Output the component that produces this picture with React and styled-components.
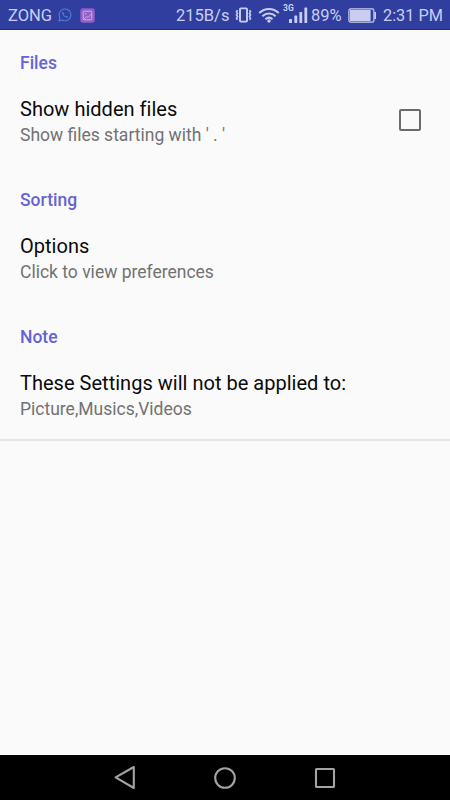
import React from "react";
import styled, { createGlobalStyle } from "styled-components";

const colors = {
  primary: "#303f9f",
  accent: "#6663d3",
  background: "#fafafa",
  title: "#0a0a0a",
  summary: "#727272",
  status: "#c9cef0",
  nav: "#a3a3a3",
};

const sections = [
  {
    header: "Files",
    title: "Show hidden files",
    summary: "Show files starting with ' . '",
    checkbox: true,
  },
  {
    header: "Sorting",
    title: "Options",
    summary: "Click to view preferences",
  },
  {
    header: "Note",
    title: "These Settings will not be applied to:",
    summary: "Picture,Musics,Videos",
  },
];

const ChatIcon = () => (
  <svg width="14" height="14" viewBox="0 0 14 14" fill="none">
    <path
      d="M1.1 13l.8-3.2A5.9 5.9 0 1 1 4.1 12z"
      stroke="#4f7fe0"
      strokeWidth="1.1"
    />
    <path
      d="M4.7 3.8c-1.3 1.3.3 3.7 1.8 4.9 1.5 1.2 2.9 1.3 3.6.1L8.6 7.7l-1 .7C6.8 8 6 7.2 5.8 6.3l.6-.8z"
      fill="#4f7fe0"
    />
  </svg>
);

const GalleryIcon = () => (
  <svg width="15" height="15" viewBox="0 0 15 15" fill="none">
    <rect x="0.3" y="0.3" width="14.4" height="14.4" rx="2.6" fill="#925fc6" />
    <rect x="3.2" y="3.2" width="8.6" height="8.6" rx="1" stroke="#d0b0e9" />
    <path d="M4 11l2.6-2.6L8 9.6 11.4 6" stroke="#d0b0e9" strokeWidth="0.9" />
    <circle cx="5.7" cy="5.7" r="0.8" fill="#d0b0e9" />
  </svg>
);

const VibrateIcon = () => (
  <svg width="17" height="16" viewBox="0 0 17 16" fill="none" stroke={colors.status}>
    <rect x="5" y="1.4" width="7" height="13.2" rx="0.8" strokeWidth="1.9" />
    <path
      d="M2.4 3.2l-.9 1.6 1 1.6-1 1.6 1 1.6-1 1.6.9 1.6M14.6 3.2l.9 1.6-1 1.6 1 1.6-1 1.6 1 1.6-.9 1.6"
      strokeWidth="1.6"
    />
  </svg>
);

const WifiIcon = () => (
  <svg width="22" height="16" viewBox="0 0 22 16" fill="none" stroke={colors.status} strokeWidth="2">
    <path d="M1.2 6C6.8.5 15.2.5 20.8 6M4.4 9.3c3.8-3.7 9.4-3.7 13.2 0M7.5 12.2c2.1-1.9 4.9-1.9 7 0" />
    <circle cx="11" cy="14" r="1.7" fill={colors.status} stroke="none" />
  </svg>
);

const SignalIcon = () => (
  <svg width="19" height="16" viewBox="0 0 19 16" fill={colors.status}>
    <rect x="0" y="12" width="3" height="4" rx="0.6" />
    <rect x="5.4" y="8.6" width="2.8" height="7.4" rx="0.6" />
    <rect x="10.4" y="5" width="2.8" height="11" rx="0.6" />
    <rect x="15.4" y="0.6" width="2.8" height="15.4" rx="0.6" />
  </svg>
);

const BatteryIcon = () => (
  <svg width="29" height="15" viewBox="0 0 29 15" fill="none">
    <rect x="0.9" y="0.9" width="25" height="13.2" rx="1.6" stroke={colors.status} strokeWidth="1.2" />
    <rect x="2" y="2" width="20.6" height="11" fill={colors.status} />
    <path d="M27.2 4v7" stroke={colors.status} strokeWidth="1.6" />
  </svg>
);

const BackIcon = () => (
  <svg width="24" height="26" viewBox="0 0 24 26" fill="none">
    <path d="M2.6 12.4L20.8 2v21z" stroke={colors.nav} strokeWidth="2.1" strokeLinejoin="round" />
  </svg>
);

const HomeIcon = () => (
  <svg width="24" height="24" viewBox="0 0 24 24" fill="none">
    <circle cx="12" cy="12" r="9.8" stroke={colors.nav} strokeWidth="2.1" />
  </svg>
);

const RecentIcon = () => (
  <svg width="24" height="24" viewBox="0 0 24 24" fill="none">
    <rect x="3" y="3" width="18" height="18" rx="0.6" stroke={colors.nav} strokeWidth="2.1" />
  </svg>
);

function App() {
  return (
    <Screen>
      <GlobalStyle />
      <StatusBar>
        <StatusText $width={50}>ZONG</StatusText>
        <ChatIcon />
        <GalleryIcon />
        <StatusRight>
          <StatusText $width={59}>215B/s</StatusText>
          <VibrateIcon />
          <WifiIcon />
          <SignalWrapper>
            <NetworkType>3G</NetworkType>
            <SignalIcon />
          </SignalWrapper>
          <StatusText $width={37}>89%</StatusText>
          <BatteryIcon />
          <Clock $width={60}>2:31 PM</Clock>
        </StatusRight>
      </StatusBar>

      <Preferences>
        {sections.map(({ header, title, summary, checkbox }) => (
          <Section key={header}>
            <SectionHeader>{header}</SectionHeader>
            <Row>
              <RowText>
                <Title>{title}</Title>
                <Summary>{summary}</Summary>
              </RowText>
              {checkbox && <Checkbox role="checkbox" aria-checked="false" />}
            </Row>
          </Section>
        ))}
      </Preferences>

      <NavBar>
        <NavBtn aria-label="Back">
          <BackIcon />
        </NavBtn>
        <NavBtn aria-label="Home">
          <HomeIcon />
        </NavBtn>
        <NavBtn aria-label="Recent apps">
          <RecentIcon />
        </NavBtn>
      </NavBar>
    </Screen>
  );
}

export default App;

const GlobalStyle = createGlobalStyle`
  * {
    box-sizing: border-box;
  }
  body {
    margin: 0;
    font-family: Roboto, "Liberation Sans", sans-serif;
    background-color: ${colors.background};
  }
  svg {
    display: block;
    flex-shrink: 0;
  }
`;
const Screen = styled.div`
  width: 450px;
  height: 800px;
  display: flex;
  flex-direction: column;
  overflow: hidden;
  background-color: ${colors.background};
`;
const StatusBar = styled.header`
  height: 30px;
  flex-shrink: 0;
  display: flex;
  align-items: center;
  padding: 1px 7px 0 8px;
  background-color: ${colors.primary};
  border-bottom: 1px solid #1d2a86;

  > svg + svg {
    margin-left: 8px;
  }
`;
const StatusRight = styled.div`
  display: flex;
  align-items: center;
  margin-left: auto;

  > svg + svg {
    margin-left: 6px;
  }
`;
const StatusText = styled.span`
  width: ${({ $width }) => $width}px;
  padding-top: 2px;
  font-size: 16.5px;
  line-height: 20px;
  white-space: nowrap;
  color: ${colors.status};
`;
const Clock = styled(StatusText)`
  margin-left: 6px;
  font-size: 16.3px;
`;
const SignalWrapper = styled.div`
  position: relative;
  margin: 0 3px 0 9px;
`;
const NetworkType = styled.span`
  position: absolute;
  top: -3px;
  left: -6px;
  font-size: 8.5px;
  line-height: 8px;
  font-weight: 700;
  color: ${colors.status};
`;
const Preferences = styled.main`
  flex-grow: 1;
`;
const Section = styled.section`
  height: 137px;
  padding-top: 23px;

  &:last-child {
    border-bottom: 2px solid #e4e4e4;
  }
`;
const SectionHeader = styled.h2`
  margin: 0;
  padding: 0 20px;
  font-size: 17.5px;
  line-height: 20px;
  font-weight: 500;
  color: ${colors.accent};
`;
const Row = styled.div`
  display: flex;
  align-items: flex-start;
  justify-content: space-between;
  padding: 25px 29px 0 20px;
`;
const RowText = styled.div`
  display: flex;
  flex-direction: column;
  gap: 4px;
`;
const Title = styled.span`
  font-size: 20px;
  line-height: 23px;
  letter-spacing: 0.02px;
  color: ${colors.title};
`;
const Summary = styled.span`
  font-size: 17.5px;
  line-height: 21px;
  color: ${colors.summary};
`;
const Checkbox = styled.div`
  width: 22px;
  height: 22px;
  margin-top: 11px;
  border: 2px solid #6b6b6b;
  border-radius: 2px;
`;
const NavBar = styled.nav`
  height: 45px;
  flex-shrink: 0;
  display: flex;
  align-items: center;
  justify-content: center;
  gap: 76px;
  background-color: #000;
`;
const NavBtn = styled.button`
  width: 24px;
  height: 26px;
  display: flex;
  align-items: center;
  justify-content: center;
  padding: 0;
  border: none;
  background: none;
`;
